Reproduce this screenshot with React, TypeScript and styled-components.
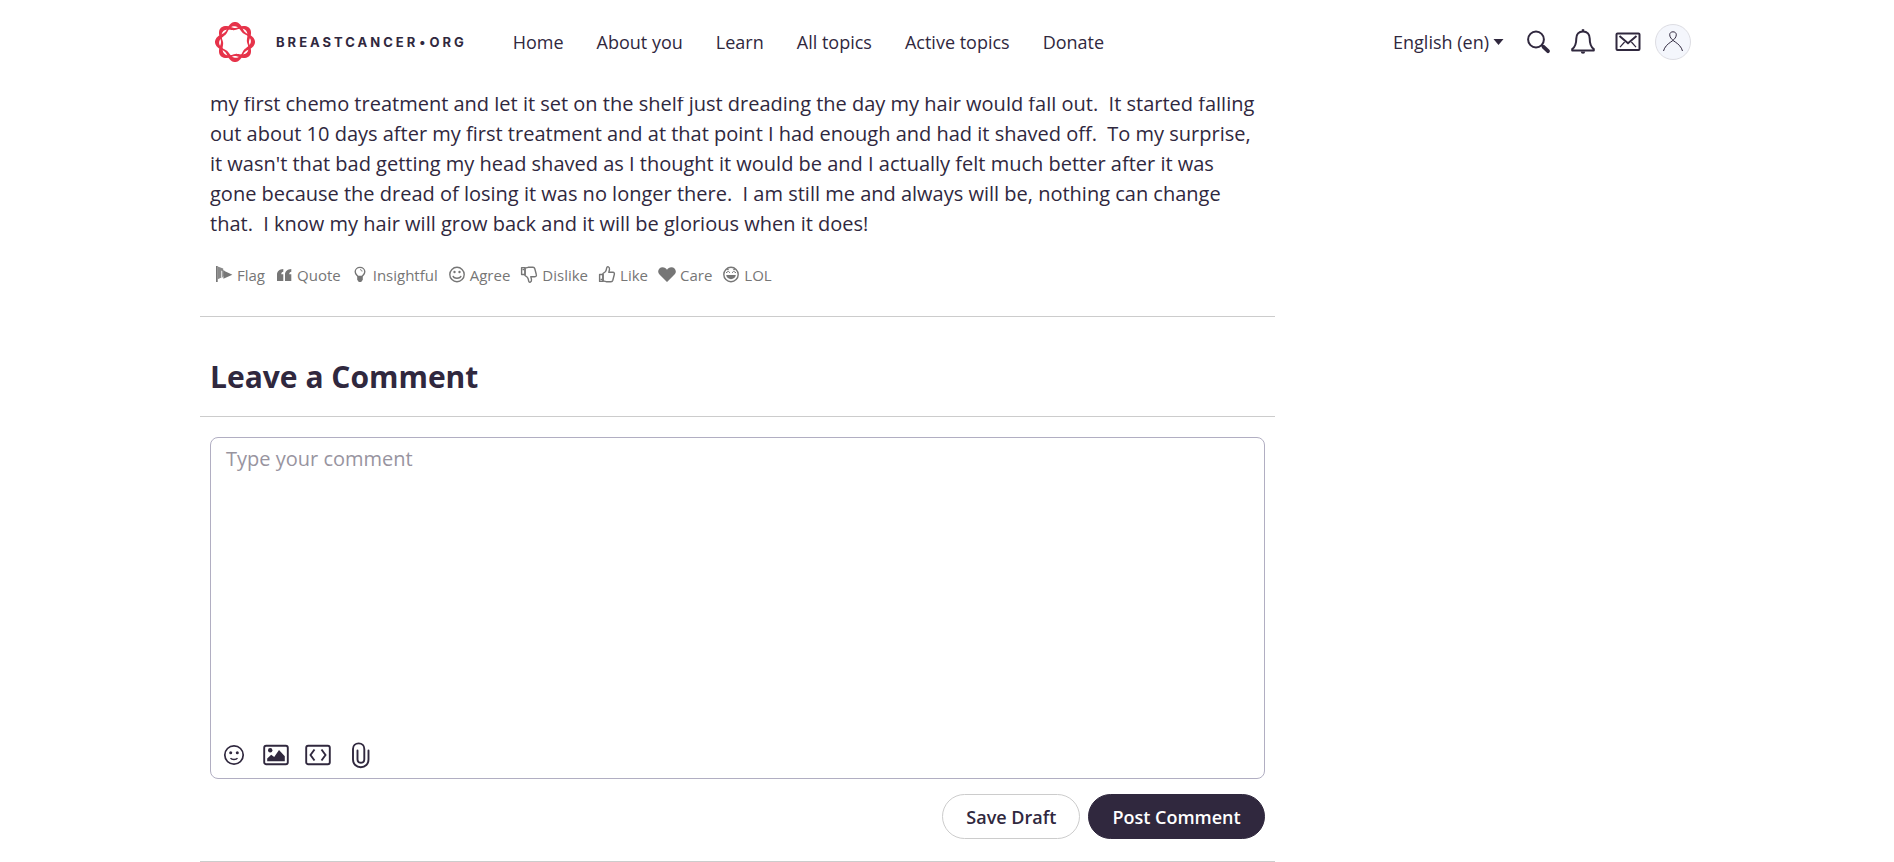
import React from "react";
import styled, { createGlobalStyle } from "styled-components";

const ink = "#30283e";

const GlobalStyle = createGlobalStyle`
  *, *::before, *::after { box-sizing: border-box; }
  body {
    margin: 0;
    background: #fff;
    color: ${ink};
    font-family: "Open Sans", "Liberation Sans", sans-serif;
    font-size: 20px;
    line-height: 30px;
  }
`;

const Header = styled.header`
  position: sticky;
  top: 0;
  z-index: 10;
  background: #fff;
  padding-bottom: 13px;
`;

const Container = styled.div`
  max-width: 1494px;
  margin: 0 auto;
`;

const HeaderBar = styled(Container)`
  display: flex;
  align-items: center;
  height: 84px;
  padding: 0 3px 0 14px;
`;

const Brand = styled.a`
  display: flex;
  align-items: center;
  gap: 20px;
  color: ${ink};
  text-decoration: none;
`;

const BrandName = styled.span`
  font-family: "Inter", sans-serif;
  font-size: 13px;
  line-height: 20px;
  font-weight: 700;
  letter-spacing: 3px;
  white-space: nowrap;
`;

const BrandDot = styled.span`
  margin: 0 1px;
`;

const Nav = styled.nav`
  display: flex;
  gap: 33px;
  margin-left: 46px;
`;

const NavLink = styled.a`
  color: ${ink};
  font-size: 18px;
  line-height: 28px;
  text-decoration: none;
  white-space: nowrap;
`;

const Tools = styled.div`
  display: flex;
  align-items: center;
  gap: 19px;
  margin-left: auto;
`;

const LanguageLabel = styled.label`
  display: flex;
  align-items: center;
  gap: 4px;
  margin-right: 2px;
`;

const LanguageSelect = styled.select`
  appearance: none;
  field-sizing: content;
  border: 0;
  padding: 0;
  background: none;
  color: ${ink};
  font: inherit;
  font-size: 18px;
  line-height: 28px;
`;

const IconButton = styled.button`
  display: flex;
  align-items: center;
  justify-content: center;
  width: 26px;
  height: 28px;
  padding: 0;
  border: 0;
  background: none;
  color: ${ink};
  cursor: pointer;
`;

const Avatar = styled.a`
  display: flex;
  align-items: center;
  justify-content: center;
  width: 36px;
  height: 36px;
  margin-left: -5px;
  border: 1px solid #dddde3;
  border-radius: 50%;
  background: #f4f6fc;
  color: ${ink};
`;

const Main = styled.main`
  width: calc(72% - 1px);
  margin-top: -8px;
`;

const Post = styled.article`
  padding: 0 10px 31px;
  border-bottom: 1px solid #ccc;
`;

const PostText = styled.p`
  margin: 0 5px 26px 0;
`;

const Reactions = styled.div`
  display: flex;
  gap: 10px;
  padding-left: 5px;
`;

const Reaction = styled.button`
  display: flex;
  align-items: center;
  gap: 4px;
  height: 20px;
  padding: 0;
  border: 0;
  background: none;
  color: #767676;
  font: inherit;
  font-size: 15px;
  line-height: 20px;
  white-space: nowrap;
  cursor: pointer;
`;

const FormTitle = styled.h2`
  margin: 0;
  padding: 39px 10px 19px;
  border-bottom: 1px solid #ccc;
  font-size: 30px;
  line-height: 41px;
  font-weight: 700;
`;

const Form = styled.form`
  padding: 20px 10px 22px;
  border-bottom: 1px solid #ccc;
`;

const Editor = styled.div`
  display: flex;
  flex-direction: column;
  border: 1px solid #b1aec2;
  border-radius: 8px;
`;

const CommentBox = styled.textarea`
  display: block;
  height: 294px;
  padding: 6px 15px;
  border: 0;
  outline: 0;
  resize: none;
  background: none;
  color: ${ink};
  font: inherit;
  &::placeholder { color: #98949f; opacity: 1; }
`;

const EditorTools = styled.div`
  display: flex;
  gap: 16px;
  height: 46px;
  padding: 9px 10px;
`;

const Actions = styled.div`
  display: flex;
  justify-content: flex-end;
  gap: 8px;
  margin-top: 15px;
`;

const PillButton = styled.button<{ $primary?: boolean }>`
  height: 45px;
  padding: 0 23px;
  border: 1px solid ${(p) => (p.$primary ? ink : "#ccc")};
  border-radius: 23px;
  background: ${(p) => (p.$primary ? ink : "#fff")};
  color: ${(p) => (p.$primary ? "#fff" : ink)};
  font: inherit;
  font-size: 18px;
  font-weight: 600;
  white-space: nowrap;
  cursor: pointer;
`;

// A closed wave around the centre: `base` is its mean radius, `swing` the height of its lobes.
const wave = (base: number, swing: number, phase: number) => {
  const points: string[] = [];
  for (let i = 0; i < 240; i++) {
    const t = (i / 240) * Math.PI * 2;
    const r = base + swing * Math.cos(4 * t + phase);
    points.push(`${(21 + r * Math.cos(t)).toFixed(2)} ${(21 + r * Math.sin(t)).toFixed(2)}`);
  }
  return `M${points.join("L")}Z`;
};

const ribbon = (phase: number) => wave(17, 3, phase) + wave(13.9, 2, phase + 0.3);

const Wreath = () => (
  <svg width="42" height="42" viewBox="0 0 42 42" fill="#e6334a" fillRule="evenodd" aria-hidden="true">
    <path d={ribbon(0)} />
    <path d={ribbon(Math.PI)} />
  </svg>
);

const Caret = () => (
  <svg width="11" height="6" viewBox="0 0 11 6" fill="currentColor" aria-hidden="true">
    <path d="M.5 0h10L5.5 6z" />
  </svg>
);

const SearchIcon = () => (
  <svg width="26" height="28" viewBox="0 0 26 28" fill="none" stroke="currentColor" aria-hidden="true">
    <circle cx="11" cy="11.500" r="7.900" strokeWidth="2" />
    <path d="M16.500 17l2 2" strokeWidth="2" />
    <path d="M18.500 18.800l4.500 4.400" strokeWidth="3.800" strokeLinecap="round" />
  </svg>
);

const BellIcon = () => (
  <svg width="26" height="28" viewBox="0 0 26 28" fill="none" stroke="currentColor" strokeWidth="2" strokeLinejoin="round" aria-hidden="true">
    <path d="M13 3.400c-4.300 0-6.700 3-6.700 7.100 0 6-1.300 8.600-4.100 10.600v1.500h21.600v-1.500c-2.800-2-4.100-4.600-4.100-10.600 0-4.100-2.400-7.100-6.700-7.100z" />
    <path d="M13 1.200v2" strokeWidth="2.400" />
    <path d="M10.800 23.500a2.200 2.200 0 0 0 4.400 0z" fill="currentColor" stroke="none" />
  </svg>
);

const MailIcon = () => (
  <svg width="26" height="28" viewBox="0 0 26 28" fill="none" stroke="currentColor" aria-hidden="true">
    <rect x="1.500" y="5.500" width="23" height="16.500" rx="1" strokeWidth="2" />
    <path d="M4.500 8l8.500 7.200L21.500 8" strokeWidth="2" />
    <path d="M5 19.200l4.600-5.200M21 19.200L16.400 14" strokeWidth="1.200" />
  </svg>
);

const PersonIcon = () => (
  <svg width="22" height="22" viewBox="0 0 22 22" fill="none" stroke="currentColor" aria-hidden="true">
    <path d="M1.500 20c1-4 4-6.800 7-8.800 3.300-2.200 5.800-4.500 5.800-7.400 0-1.800-1.300-3-3.300-3s-3.300 1.200-3.300 3c0 2.900 2.500 5.200 5.800 7.400 3 2 6 4.800 7 8.800" />
  </svg>
);

type GlyphProps = { children: React.ReactNode };

const Glyph = ({ children }: GlyphProps) => (
  <svg width="18" height="20" viewBox="0 0 18 20" fill="none" stroke="currentColor" strokeWidth="1.400" strokeLinejoin="round" aria-hidden="true">
    {children}
  </svg>
);

const thumb = "M5 8.500l2.300-1.700c1-.9 1.200-2.600 1.500-4.300.2-1.300 3-.8 2.700 1.800l-.7 3h4c1.600 0 1.800 1.200 1.500 2.200l-1.500 5.700c-.3 1-.8 1.500-1.800 1.500H8.200L5 15.800z";

const reactions = [
  {
    label: "Flag",
    icon: (
      <g fill="currentColor" stroke="none">
        <path d="M1 1h1.700v16H1z" />
        <path d="M2.700 1.500l5.500 2v2.200H6v7l-3.300 1.500z" opacity=".85" />
        <path d="M6.600 4.500l3 1.300v4.500l-3 3z" opacity=".7" />
        <path d="M8.400 5.600l9 4.200-9 4z" />
      </g>
    ),
  },
  {
    label: "Quote",
    icon: (
      <path
        d="M8.300 4v2.700C7 6.900 6.300 7.700 6.300 9.300h2V16H2V9.800C2 6.300 4.300 4.200 8.300 4zM16.300 4v2.700c-1.300.2-2 1-2 2.600h2V16H10V9.800C10 6.300 12.300 4.200 16.300 4z"
        fill="currentColor"
        stroke="none"
      />
    ),
  },
  {
    label: "Insightful",
    icon: (
      <>
        <path d="M7 11.500C5.800 10 4.200 9 4.200 6.700a4.800 4.300 0 0 1 9.600 0c0 2.300-1.600 3.300-2.800 4.800z" />
        <path d="M9 4.700c1.300 0 2 .7 2 1.800" strokeWidth="1" />
        <path d="M6.200 11.500h5.600v3.300l-1.600 2.200H7.800l-1.600-2.200z" fill="currentColor" stroke="none" />
      </>
    ),
  },
  {
    label: "Agree",
    icon: (
      <>
        <circle cx="9" cy="9.500" r="7.200" />
        <circle cx="6.500" cy="7" r="1.200" fill="currentColor" stroke="none" />
        <circle cx="11.500" cy="7" r="1.200" fill="currentColor" stroke="none" />
        <path d="M5 10.800c.6 3.200 7.400 3.200 8 0" />
      </>
    ),
  },
  {
    label: "Dislike",
    icon: (
      <g transform="matrix(1 0 0 -1 0 19)">
        <path d={thumb} />
        <path d="M1.600 9.500H5v6.900H1.600z" />
        <path d="M2.500 14.500h1.500" strokeWidth="1.500" />
      </g>
    ),
  },
  {
    label: "Like",
    icon: (
      <>
        <path d={thumb} />
        <path d="M1.600 9.500H5v6.900H1.600z" />
        <path d="M2.500 14.500h1.500" strokeWidth="1.500" />
      </>
    ),
  },
  {
    label: "Care",
    icon: <path d="M9 17L1.500 9.600C-1.500 6.400 1 2.200 4.600 2.200c2 0 3.500.9 4.400 2.500.9-1.600 2.400-2.500 4.400-2.500 3.600 0 6.100 4.200 3.100 7.400z" fill="currentColor" stroke="none" />,
  },
  {
    label: "LOL",
    icon: (
      <>
        <circle cx="9" cy="9.500" r="7.200" />
        <path d="M4.200 10h9.600c-.4 5.500-9.200 5.500-9.600 0z" fill="currentColor" stroke="none" />
        <path d="M4 7.800l2.300-1.500 1.700 1.500M10 7.800l1.700-1.500L14 7.800M4.800 4.800l2-.5M13.200 4.800l-2-.5" strokeWidth="1" />
      </>
    ),
  },
];

const EmojiIcon = () => (
  <svg width="26" height="28" viewBox="0 0 26 28" fill="none" stroke="currentColor" strokeWidth="1.700" aria-hidden="true">
    <circle cx="13" cy="14" r="9.200" />
    <circle cx="9.700" cy="11.700" r="1.500" fill="currentColor" stroke="none" />
    <circle cx="16.300" cy="11.700" r="1.500" fill="currentColor" stroke="none" />
    <path d="M9.500 17.200c1.300 1.700 5.700 1.700 7 0" strokeWidth="1.300" />
  </svg>
);

const ImageIcon = () => (
  <svg width="26" height="28" viewBox="0 0 26 28" fill="none" stroke="currentColor" strokeWidth="1.900" aria-hidden="true">
    <rect x="1.200" y="4.800" width="23.600" height="18.400" rx="2" />
    <circle cx="7.200" cy="9.300" r="2.200" fill="currentColor" stroke="none" />
    <path d="M4.200 20.300v-2.800l4-3.800 3 2.300 4.800-7 5.800 6.200v5.100z" fill="currentColor" stroke="none" />
  </svg>
);

const CodeIcon = () => (
  <svg width="26" height="28" viewBox="0 0 26 28" fill="none" stroke="currentColor" strokeWidth="1.900" aria-hidden="true">
    <rect x="1.200" y="4.800" width="23.600" height="18.400" rx="2" />
    <path d="M9.500 8.500L5.500 14l4 5.500M16.500 8.500l4 5.500-4 5.500" />
  </svg>
);

const ClipIcon = () => (
  <svg width="26" height="28" viewBox="0 0 26 28" fill="none" stroke="currentColor" strokeWidth="1.900" strokeLinecap="round" aria-hidden="true">
    <path d="M21.500 9.500v9c0 4.500-3.200 7.700-7.700 7.700s-7.800-3.200-7.800-7.700V8c0-3.300 2.400-5.600 5.700-5.600S17.300 4.700 17.300 8v10.200c0 2-1.400 3.500-3.400 3.500s-3.400-1.500-3.400-3.500V9.500" />
  </svg>
);

const navItems = ["Home", "About you", "Learn", "All topics", "Active topics", "Donate"];

const editorTools = [
  { label: "Emoji", icon: <EmojiIcon /> },
  { label: "Attach image", icon: <ImageIcon /> },
  { label: "Toggle HTML view", icon: <CodeIcon /> },
  { label: "Attach file", icon: <ClipIcon /> },
];

export default function App() {
  return (
    <>
      <GlobalStyle />
      <Header>
        <HeaderBar>
          <Brand href="#">
            <Wreath />
            <BrandName>
              BREASTCANCER<BrandDot>•</BrandDot>ORG
            </BrandName>
          </Brand>
          <Nav>
            {navItems.map((item) => (
              <NavLink href="#" key={item}>{item}</NavLink>
            ))}
          </Nav>
          <Tools>
            <LanguageLabel>
              <LanguageSelect aria-label="Language">
                <option>English (en)</option>
              </LanguageSelect>
              <Caret />
            </LanguageLabel>
            <IconButton type="button" aria-label="Search"><SearchIcon /></IconButton>
            <IconButton type="button" aria-label="Notifications"><BellIcon /></IconButton>
            <IconButton type="button" aria-label="Messages"><MailIcon /></IconButton>
            <Avatar href="#" aria-label="Profile"><PersonIcon /></Avatar>
          </Tools>
        </HeaderBar>
      </Header>
      <Container>
        <Main>
          <Post>
            <PostText>
              my first chemo treatment and let it set on the shelf just dreading the day my hair would fall
              out.&nbsp; It started falling out about 10 days after my first treatment and at that point I had
              enough and had it shaved off.&nbsp; To my surprise, it wasn't that bad getting my head shaved as I
              thought it would be and I actually felt much better after it was gone because the dread of losing
              it was no longer there.&nbsp; I am still me and always will be, nothing can change that.&nbsp; I
              know my hair will grow back and it will be glorious when it does!
            </PostText>
            <Reactions>
              {reactions.map(({ label, icon }) => (
                <Reaction type="button" key={label}>
                  <Glyph>{icon}</Glyph>
                  {label}
                </Reaction>
              ))}
            </Reactions>
          </Post>
          <FormTitle>Leave a Comment</FormTitle>
          <Form onSubmit={(e) => e.preventDefault()}>
            <Editor>
              <CommentBox aria-label="Comment" placeholder="Type your comment" />
              <EditorTools>
                {editorTools.map(({ label, icon }) => (
                  <IconButton type="button" aria-label={label} key={label}>{icon}</IconButton>
                ))}
              </EditorTools>
            </Editor>
            <Actions>
              <PillButton type="button">Save Draft</PillButton>
              <PillButton type="submit" $primary>Post Comment</PillButton>
            </Actions>
          </Form>
        </Main>
      </Container>
    </>
  );
}
